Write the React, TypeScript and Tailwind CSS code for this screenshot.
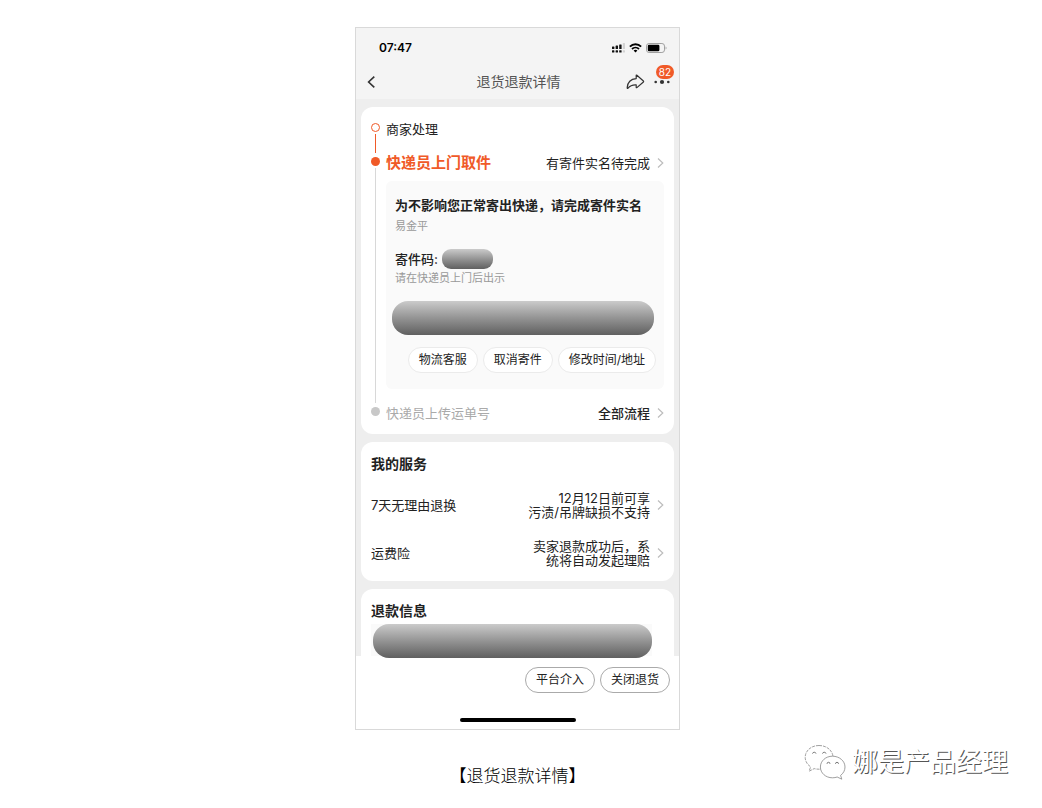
import type { ReactNode } from 'react';

const FUENTE = 'font-[Inter,"Noto_Sans_CJK_SC",sans-serif]';

function Chevron() {
  return (
    <svg width="7" height="10" viewBox="0 0 7 10" fill="none" stroke="#bdbdbd" strokeWidth="1.2" className="shrink-0" aria-hidden="true">
      <path d="M1 0.5 L5.8 5 L1 9.5" />
    </svg>
  );
}

function Redacted({ className }: { className: string }) {
  return <div className={`bg-linear-to-b from-[#cbcbcb] to-[#606060] ${className}`} />;
}

function StatusBar() {
  return (
    <div className="flex h-10 items-center justify-between pr-3 pl-[23px] text-[12px] font-semibold text-black">
      <time>07:47</time>
      <div className="flex items-center gap-1">
        <svg width="13" height="10" viewBox="0 0 13 10" aria-hidden="true">
          <g fill="#111">
            <rect x="0" y="3.5" width="2.4" height="2.5" rx="0.5" />
            <rect x="3.6" y="2.4" width="2.4" height="3.6" rx="0.5" />
            <rect x="7.2" y="1.6" width="2.4" height="4.4" rx="0.5" />
            <rect x="0" y="7.2" width="2.4" height="2.2" rx="0.5" />
            <rect x="3.6" y="7.2" width="2.4" height="2.2" rx="0.5" />
            <rect x="7.2" y="7.2" width="2.4" height="2.2" rx="0.5" />
          </g>
          <g fill="#d2d2d2">
            <rect x="10.8" y="0" width="2.2" height="6" rx="0.5" />
            <rect x="10.8" y="7.2" width="2.2" height="2.2" rx="0.5" />
          </g>
        </svg>
        <svg width="13" height="10" viewBox="0 0 13 10" fill="none" stroke="#000" aria-hidden="true">
          <path d="M0.9 3.7 C4 0.5 9 0.5 12.1 3.7" strokeWidth="1.9" />
          <path d="M3 6 C5 4.1 8 4.1 10 6" strokeWidth="1.8" />
          <path d="M4.6 7.5 C5.8 6.6 7.2 6.6 8.4 7.5 L6.5 9.5 Z" fill="#000" stroke="none" />
        </svg>
        <svg width="21" height="10" viewBox="0 0 21 10" aria-hidden="true">
          <rect x="0.5" y="0.5" width="18" height="9" rx="2.6" fill="none" stroke="#a0a0a0" />
          <rect x="1.8" y="1.8" width="11.6" height="6.4" rx="1.3" fill="#000" />
          <path d="M19.6 3.4 C20.8 3.8 20.8 6.2 19.6 6.6 Z" fill="#a0a0a0" />
        </svg>
      </div>
    </div>
  );
}

function NavBar() {
  return (
    <div className="grid h-[31px] grid-cols-[1fr_auto_1fr] items-center pr-[9px] pb-1 pl-[11px]">
      <button type="button" aria-label="返回" className="justify-self-start">
        <svg width="9" height="12" viewBox="0 0 9 12" fill="none" stroke="#333" strokeWidth="1.6">
          <path d="M7.3 0.6 L1.6 6 L7.3 11.4" />
        </svg>
      </button>
      <h1 className="text-[14px] leading-5 text-[#555]">退货退款详情</h1>
      <div className="flex items-center gap-[9px] justify-self-end">
        <button type="button" aria-label="分享">
          <svg width="19" height="16" viewBox="0 0 19 16" fill="none" stroke="#333" strokeWidth="1.2" strokeLinejoin="round">
            <path d="M10.2 1.6 Q10.2 0.8 10.9 1.3 L17.4 7 Q17.9 7.5 17.4 8 L10.9 13.6 Q10.2 14 10.2 13.2 V10.8 C6.6 10.6 4 11.6 2 14.2 Q1.1 15 1.2 13.6 C1.6 8.4 4.8 5 10.2 4.6 Z" />
          </svg>
        </button>
        <button type="button" aria-label="更多" className="relative">
          <svg width="16" height="6" viewBox="0 0 16 6" fill="#333">
            <circle cx="1.7" cy="3" r="1.3" />
            <circle cx="8" cy="3" r="2.1" />
            <circle cx="14.3" cy="3" r="1.3" />
          </svg>
          <span className="absolute -right-1 bottom-[6px] rounded-full bg-[#f05a28] px-[3px] text-[10px] leading-[14px] text-white">82</span>
        </button>
      </div>
    </div>
  );
}

type StepProps = {
  dot: string;
  line?: string;
  className?: string;
  children: ReactNode;
};

function Step({ dot, line, className = '', children }: StepProps) {
  return (
    <li className="flex gap-[6px]">
      <div className="flex w-[9px] shrink-0 flex-col items-center gap-[2px] pt-1">
        <span className={`size-[9px] shrink-0 rounded-full ${dot}`} />
        {line && <span className={`w-px flex-1 ${line}`} />}
      </div>
      <div className={`min-w-0 flex-1 text-[13px] leading-5 ${className}`}>{children}</div>
    </li>
  );
}

function PanelButton({ children }: { children: ReactNode }) {
  return (
    <button type="button" className="h-[26px] rounded-full border border-[#ebebeb] bg-white px-[10px] text-[12px] leading-4 text-[#222]">
      {children}
    </button>
  );
}

function FooterButton({ children }: { children: ReactNode }) {
  return (
    <button type="button" className="h-[26px] rounded-full border border-[#aaa] bg-white px-[10px] text-[12px] leading-4 text-[#222]">
      {children}
    </button>
  );
}

function PickupPanel() {
  return (
    <div className="mt-2 rounded-md bg-[#fafafa] pt-[14px] pr-2 pb-4 pl-[6px]">
      <div className="pl-[3px]">
        <p className="whitespace-nowrap font-bold text-[#222]">为不影响您正常寄出快递，请完成寄件实名</p>
        <p className="mt-[3px] text-[11px] leading-4 text-[#999]">易金平</p>
        <div className="mt-[15px] flex items-center gap-1">
          <span className="font-medium text-[#222]">寄件码:</span>
          <Redacted className="h-5 w-[51px] rounded-[9px]" />
        </div>
        <p className="mt-px text-[11px] leading-4 text-[#999]">请在快递员上门后出示</p>
      </div>
      <Redacted className="mt-[15px] mr-[2px] h-[34px] rounded-2xl" />
      <div className="mt-3 flex justify-end gap-[5px]">
        <PanelButton>物流客服</PanelButton>
        <PanelButton>取消寄件</PanelButton>
        <PanelButton>修改时间/地址</PanelButton>
      </div>
    </div>
  );
}

function ProgressCard() {
  return (
    <section className="rounded-xl bg-white px-[10px] pt-3 pb-[11px]">
      <ol>
        <Step dot="border border-[#f05a28] bg-white" line="bg-[#f05a28]" className="pb-[14px] text-[#222]">
          商家处理
        </Step>
        <Step dot="bg-[#f05a28]" line="bg-[#d8d8d8]" className="pb-[14px]">
          <div className="flex items-center justify-between">
            <h2 className="text-[15px] font-bold text-[#f05a28]">快递员上门取件</h2>
            <a href="#shiming" className="flex items-center gap-[7px] text-[#222]">
              有寄件实名待完成
              <Chevron />
            </a>
          </div>
          <PickupPanel />
        </Step>
        <Step dot="bg-[#c8c8c8]" className="flex items-center justify-between">
          <span className="text-[#aaa]">快递员上传运单号</span>
          <a href="#liucheng" className="flex items-center gap-[7px] font-medium text-[#222]">
            全部流程
            <Chevron />
          </a>
        </Step>
      </ol>
    </section>
  );
}

const servicios = [
  { id: 'tuihuan', label: '7天无理由退换', lines: ['12月12日前可享', '污渍/吊牌缺损不支持'] },
  { id: 'yunfei', label: '运费险', lines: ['卖家退款成功后，系', '统将自动发起理赔'] },
];

function ServicesCard() {
  return (
    <section className="rounded-xl bg-white px-[10px] pt-3 pb-[14px]">
      <h2 className="text-[14px] font-bold leading-5 text-[#222]">我的服务</h2>
      <div className="mt-[17px] flex flex-col gap-5 text-[13px] leading-[14px] text-[#222]">
        {servicios.map(s => (
          <a key={s.id} href={`#${s.id}`} className="flex items-center">
            <span className="flex-1">{s.label}</span>
            <span className="mr-[7px] text-right">
              {s.lines.map(l => (
                <span key={l} className="block">{l}</span>
              ))}
            </span>
            <Chevron />
          </a>
        ))}
      </div>
    </section>
  );
}

function RefundCard() {
  return (
    <section className="rounded-t-xl bg-white px-[10px] pt-3">
      <h2 className="text-[14px] font-bold leading-5 text-[#222]">退款信息</h2>
      <div className="mt-[3px] mr-3 h-8 bg-[#fafafa] pl-[2px]">
        <Redacted className="relative h-[34px] rounded-2xl" />
      </div>
    </section>
  );
}

function WechatLogo() {
  return (
    <svg width="42" height="36" viewBox="0 0 42 36" fill="white" strokeLinejoin="round" aria-hidden="true">
      <g stroke="#888" strokeWidth="0.8">
        <path d="M15 1.5 C7 1.5 1.2 6.8 1.2 13.3 C1.2 17.2 3.2 20.6 6.6 22.8 L5.2 27.2 L10.2 24.6 C12 25.1 13.6 25.3 15.6 25.2 C22.6 25 29 20 29 13.4 C29 6.8 23 1.5 15 1.5 Z" strokeDasharray="3 1" />
        <path d="M28.5 12.2 C21.6 12.2 16.4 17 16.4 23 C16.4 29 21.6 33.8 28.5 33.8 C30.2 33.8 31.8 33.5 33.2 33 L37.8 35.2 L36.6 31.4 C39.3 29.4 41 26.4 41 23 C41 17 35.4 12.2 28.5 12.2 Z" />
      </g>
      <g fill="none" stroke="#777" strokeWidth="1">
        <path d="M8.5 9.6 A1.8 1.8 0 0 1 12 9.6" />
        <path d="M18.5 9.6 A1.8 1.8 0 0 1 22 9.6" />
        <path d="M23 19.8 A1.5 1.5 0 0 1 26 19.8" />
        <path d="M31.5 19.8 A1.5 1.5 0 0 1 34.5 19.8" />
      </g>
    </svg>
  );
}

export default function App() {
  return (
    <div className={`relative min-h-screen bg-white pt-[27px] pr-[7px] ${FUENTE}`}>
      <main className="mx-auto w-full max-w-[325px] border border-[#d9d9d9] bg-white">
        <header className="bg-[#f4f4f4]">
          <StatusBar />
          <NavBar />
        </header>
        <div className="flex flex-col gap-2 bg-[#eee] px-[5px] pt-2">
          <ProgressCard />
          <ServicesCard />
          <RefundCard />
        </div>
        <footer className="pt-[11px] pr-[9px] pb-[7px] pl-[9px]">
          <div className="flex justify-end gap-[5px]">
            <FooterButton>平台介入</FooterButton>
            <FooterButton>关闭退货</FooterButton>
          </div>
          <div className="mx-auto mt-[25px] h-1 w-[116px] rounded-full bg-black" />
        </footer>
      </main>
      <p className="mt-[34px] text-center text-[17px] font-light leading-6 text-black">【退货退款详情】</p>
      <div className="absolute right-[34px] bottom-7 flex items-center gap-[6px]">
        <WechatLogo />
        <span className="text-[26px] leading-9 text-white [text-shadow:1px_1px_0_#555]">娜是产品经理</span>
      </div>
    </div>
  );
}
